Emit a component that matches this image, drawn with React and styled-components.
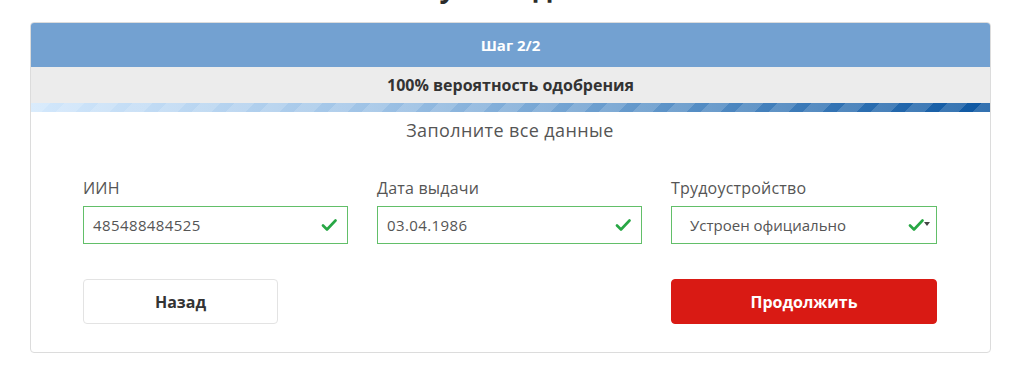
import React from "react";
import styled, { createGlobalStyle } from "styled-components";

const Global = createGlobalStyle`
  html, body { margin: 0; padding: 0; background: #fff; }
  body { font-family: "Open Sans", "DejaVu Sans", sans-serif; color: #333; }
  * { box-sizing: border-box; }
`;

const Page = styled.div`
  padding: 0 0 20px 30px;
  overflow: hidden;
  height: 372px;
`;

const Heading = styled.h1`
  width: 961px;
  margin: -32px 0 18px;
  height: 36px;
  line-height: 36px;
  text-align: center;
  font-size: 28px;
  font-weight: 700;
  color: #2b2b2b;
`;

const Card = styled.div`
  width: 961px;
  border: 1px solid #dcdcdc;
  border-radius: 4px;
  overflow: hidden;
  background: #fff;
`;

const StepBar = styled.div`
  height: 44px;
  background: #73a1d1;
  color: #fff;
  font-weight: 700;
  font-size: 15px;
  display: flex;
  align-items: center;
  justify-content: center;
`;

const ChanceBar = styled.div`
  height: 36px;
  background: #ececec;
  color: #333;
  font-weight: 700;
  font-size: 16px;
  display: flex;
  align-items: center;
  justify-content: center;
`;

const Progress = styled.div`
  height: 9px;
  background:
    repeating-linear-gradient(
      135deg,
      rgba(255, 255, 255, 0.16) 0 14px,
      rgba(255, 255, 255, 0) 14px 24px
    ),
    linear-gradient(90deg, #d3e8fc 0%, #9fc3e6 35%, #5f95c9 65%, #0c56a1 100%);
`;

const Body = styled.div`
  padding: 6px 53px 28px 52px;
`;

const Title = styled.div`
  text-align: center;
  font-size: 18px;
  letter-spacing: 0.4px;
  color: #555;
  line-height: 24px;
  margin-bottom: 36px;
`;

const Fields = styled.div`
  display: grid;
  grid-template-columns: 265px 265px 266px;
  justify-content: space-between;
`;

const Field = styled.div`
  display: flex;
  flex-direction: column;
`;

const Label = styled.div`
  font-size: 16px;
  letter-spacing: 0.2px;
  color: #555;
  line-height: 20px;
  margin-bottom: 8px;
`;

const InputBox = styled.div`
  height: 38px;
  border: 1px solid #62bf69;
  display: flex;
  align-items: center;
  padding: 0 10px 0 ${(p) => (p.$select ? "18px" : "9px")};
  font-size: 15px;
  letter-spacing: ${(p) => (p.$select ? "0" : "0.4px")};
  color: #555;
`;

const Value = styled.span`
  flex: 1;
`;

const Caret = styled.span`
  width: 0;
  height: 0;
  border-left: 3px solid transparent;
  border-right: 3px solid transparent;
  border-top: 4px solid #444;
  margin-right: -4px;
  margin-top: -3px;
`;

const Buttons = styled.div`
  display: flex;
  justify-content: space-between;
  margin-top: 35px;
`;

const Button = styled.button`
  height: 45px;
  width: ${(p) => p.$w}px;
  border-radius: 4px;
  font-family: inherit;
  font-size: 16px;
  font-weight: 700;
  cursor: pointer;
  border: 1px solid ${(p) => (p.$primary ? "#d91a14" : "#e3e3e3")};
  background: ${(p) => (p.$primary ? "#d91a14" : "#fff")};
  color: ${(p) => (p.$primary ? "#fff" : "#333")};
`;

const Check = () => (
  <svg width="16" height="14" viewBox="0 0 16 14">
    <path d="M2 7.5 L6 11.5 L14.5 2.5" fill="none" stroke="#28a745" strokeWidth="2.6" strokeLinecap="round" strokeLinejoin="round" />
  </svg>
);

export default function App() {
  return (
    <>
      <Global />
      <Page>
        <Heading>Получите деньги</Heading>
        <Card>
          <StepBar>Шаг 2/2</StepBar>
          <ChanceBar>100% вероятность одобрения</ChanceBar>
          <Progress />
          <Body>
            <Title>Заполните все данные</Title>
            <Fields>
              <Field>
                <Label>ИИН</Label>
                <InputBox>
                  <Value>485488484525</Value>
                  <Check />
                </InputBox>
              </Field>
              <Field>
                <Label>Дата выдачи</Label>
                <InputBox>
                  <Value>03.04.1986</Value>
                  <Check />
                </InputBox>
              </Field>
              <Field>
                <Label>Трудоустройство</Label>
                <InputBox $select>
                  <Value>Устроен официально</Value>
                  <Check />
                  <Caret />
                </InputBox>
              </Field>
            </Fields>
            <Buttons>
              <Button $w={195}>Назад</Button>
              <Button $w={266} $primary>Продолжить</Button>
            </Buttons>
          </Body>
        </Card>
      </Page>
    </>
  );
}
